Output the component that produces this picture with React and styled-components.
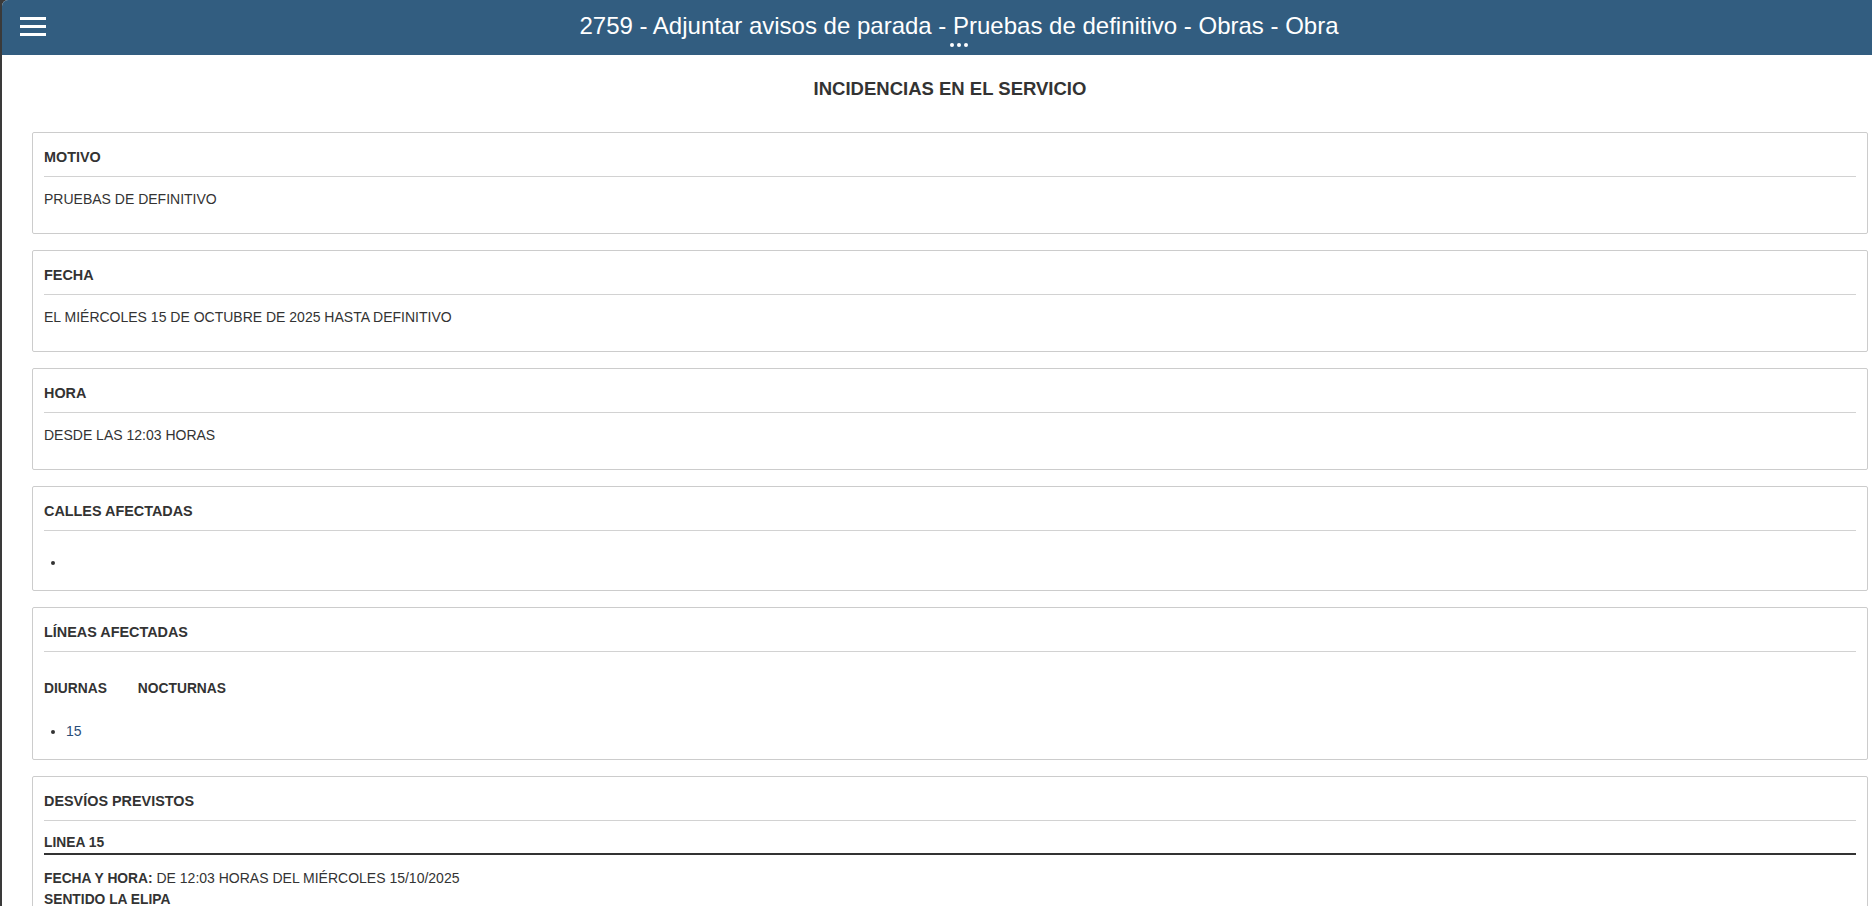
import React from "react"
import styled, { createGlobalStyle } from "styled-components"

const GlobalStyle = createGlobalStyle`
  html, body {
    margin: 0;
    padding: 0;
  }
  body {
    background: #3a3a3a;
    font-family: "Liberation Sans", Arial, sans-serif;
    color: #333;
  }
  * {
    box-sizing: border-box;
  }
`

const sections = [
  { title: "MOTIVO", text: "PRUEBAS DE DEFINITIVO" },
  { title: "FECHA", text: "EL MIÉRCOLES 15 DE OCTUBRE DE 2025 HASTA DEFINITIVO" },
  { title: "HORA", text: "DESDE LAS 12:03 HORAS" },
]

const App = () => {
  return (
    <>
      <GlobalStyle />
      <Shell>
        <TopBar>
          <MenuButton aria-label="Menú">
            <svg width="26" height="19" viewBox="0 0 26 19">
              <rect x="0" y="0" width="26" height="3" fill="#fff" />
              <rect x="0" y="8" width="26" height="3" fill="#fff" />
              <rect x="0" y="16" width="26" height="3" fill="#fff" />
            </svg>
          </MenuButton>
          <TitleBlock>
            <Title>2759 - Adjuntar avisos de parada - Pruebas de definitivo - Obras - Obra</Title>
            <Dots>
              <span />
              <span />
              <span />
            </Dots>
          </TitleBlock>
        </TopBar>

        <Content>
          <PageTitle>INCIDENCIAS EN EL SERVICIO</PageTitle>

          {sections.map(s => (
            <Card key={s.title}>
              <CardTitle>{s.title}</CardTitle>
              <Divider />
              <Text>{s.text}</Text>
            </Card>
          ))}

          <Card>
            <CardTitle>CALLES AFECTADAS</CardTitle>
            <Divider />
            <List top="21px">
              <li></li>
            </List>
          </Card>

          <Card>
            <CardTitle>LÍNEAS AFECTADAS</CardTitle>
            <Divider />
            <Tabs>
              <span>DIURNAS</span>
              <span>NOCTURNAS</span>
            </Tabs>
            <List top="22px" link>
              <li>15</li>
            </List>
          </Card>

          <Card>
            <CardTitle>DESVÍOS PREVISTOS</CardTitle>
            <Divider />
            <LineHeading>LINEA 15</LineHeading>
            <Detail>
              <b>FECHA Y HORA:</b> DE 12:03 HORAS DEL MIÉRCOLES 15/10/2025
            </Detail>
            <Detail>
              <b>SENTIDO LA ELIPA</b>
            </Detail>
          </Card>
        </Content>
      </Shell>
    </>
  )
}

export default App

const Shell = styled.div`
  margin-left: 2px;
  min-height: 100vh;
  background: #fff;
  border-top-left-radius: 6px;
  overflow: hidden;
`

const TopBar = styled.header`
  display: flex;
  height: 55px;
  background: #325d80;
  color: #fff;
`

const MenuButton = styled.button`
  width: 44px;
  flex: none;
  align-self: flex-start;
  padding: 17px 0 0 18px;
  border: none;
  background: none;
  cursor: pointer;
  line-height: 0;
  text-align: left;
`

const TitleBlock = styled.div`
  flex: 1;
  display: flex;
  flex-direction: column;
  align-items: center;
  padding-top: 12px;
`

const Title = styled.h1`
  margin: 0;
  font-size: 24px;
  line-height: 28px;
  font-weight: normal;
  white-space: nowrap;
`

const Dots = styled.div`
  display: flex;
  gap: 3px;
  margin-top: 3px;

  span {
    width: 4px;
    height: 4px;
    border-radius: 50%;
    background: #fff;
  }
`

const Content = styled.main`
  padding: 23px 4px 0 30px;
`

const PageTitle = styled.h2`
  margin: 0 0 32px;
  text-align: center;
  font-size: 18.5px;
  line-height: 22px;
  font-weight: bold;
  color: #333;
`

const Card = styled.section`
  border: 1px solid #ccc;
  border-radius: 2px;
  padding: 14px 11px 18px;
  margin-bottom: 16px;
`

const CardTitle = styled.h3`
  margin: 0;
  font-size: 14.4px;
  line-height: 20px;
  font-weight: bold;
  color: #333;
`

const Divider = styled.hr`
  margin: 9px 0 0;
  border: 0;
  border-top: 1px solid #d2d2d2;
`

const Text = styled.p`
  margin: 12px 0 6px;
  font-size: 14px;
  line-height: 20px;
`

const List = styled.ul`
  margin: ${({ top }) => top} 0 0;
  padding-left: 22px;
  font-size: 14px;
  line-height: 20px;

  li {
    min-height: 20px;
    color: ${({ link }) => (link ? "#2a4d78" : "#333")};
  }
  li::marker {
    color: #333;
  }
`

const Tabs = styled.div`
  display: flex;
  gap: 31px;
  margin-top: 27px;
  font-size: 13.8px;
  line-height: 20px;
  font-weight: bold;
`

const LineHeading = styled.h4`
  margin: 12px 0 0;
  font-size: 13.8px;
  line-height: 20px;
  font-weight: bold;
  border-bottom: 2px solid #333;
`

const Detail = styled.div`
  font-size: 14px;
  line-height: 20px;

  &:first-of-type {
    margin-top: 13px;
  }

  b {
    font-size: 13.8px;
  }
`
